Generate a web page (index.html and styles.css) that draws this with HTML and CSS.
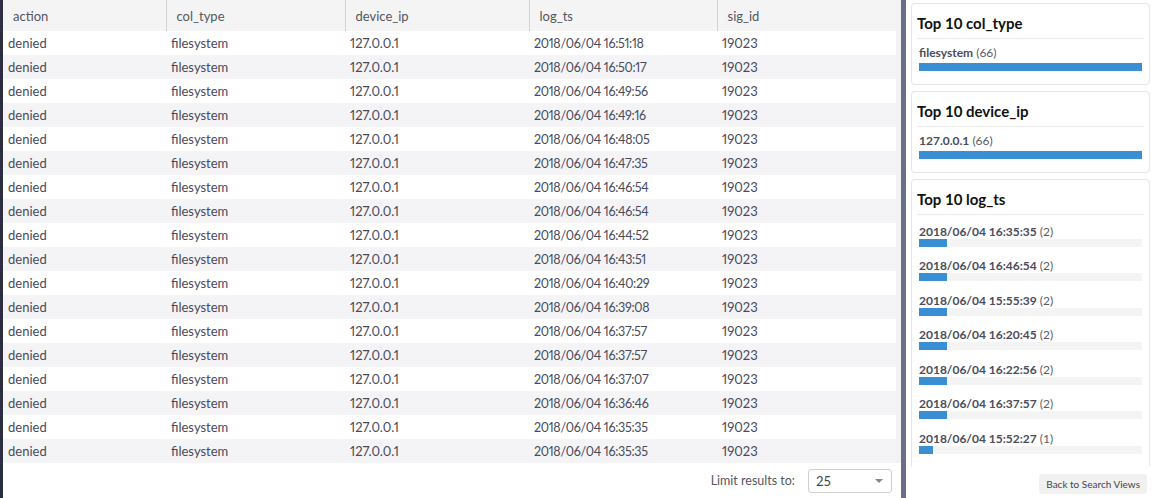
FILE: index.html
```html
<!DOCTYPE html>
<html>
<head>
<meta charset="utf-8">
<link rel="stylesheet" href="styles.css">
</head>
<body>
<div class="app">
  <div class="leftbar"></div>
  <div class="main">
    <div class="table-area">
      <table class="grid">
        <colgroup>
          <col class="c1"><col class="c2"><col class="c3"><col class="c4"><col class="c5">
        </colgroup>
        <thead>
          <tr><th>action</th><th>col_type</th><th>device_ip</th><th>log_ts</th><th>sig_id</th></tr>
        </thead>
        <tbody>
          <tr><td>denied</td><td>filesystem</td><td>127.0.0.1</td><td>2018/06/04 16:51:18</td><td>19023</td></tr>
          <tr><td>denied</td><td>filesystem</td><td>127.0.0.1</td><td>2018/06/04 16:50:17</td><td>19023</td></tr>
          <tr><td>denied</td><td>filesystem</td><td>127.0.0.1</td><td>2018/06/04 16:49:56</td><td>19023</td></tr>
          <tr><td>denied</td><td>filesystem</td><td>127.0.0.1</td><td>2018/06/04 16:49:16</td><td>19023</td></tr>
          <tr><td>denied</td><td>filesystem</td><td>127.0.0.1</td><td>2018/06/04 16:48:05</td><td>19023</td></tr>
          <tr><td>denied</td><td>filesystem</td><td>127.0.0.1</td><td>2018/06/04 16:47:35</td><td>19023</td></tr>
          <tr><td>denied</td><td>filesystem</td><td>127.0.0.1</td><td>2018/06/04 16:46:54</td><td>19023</td></tr>
          <tr><td>denied</td><td>filesystem</td><td>127.0.0.1</td><td>2018/06/04 16:46:54</td><td>19023</td></tr>
          <tr><td>denied</td><td>filesystem</td><td>127.0.0.1</td><td>2018/06/04 16:44:52</td><td>19023</td></tr>
          <tr><td>denied</td><td>filesystem</td><td>127.0.0.1</td><td>2018/06/04 16:43:51</td><td>19023</td></tr>
          <tr><td>denied</td><td>filesystem</td><td>127.0.0.1</td><td>2018/06/04 16:40:29</td><td>19023</td></tr>
          <tr><td>denied</td><td>filesystem</td><td>127.0.0.1</td><td>2018/06/04 16:39:08</td><td>19023</td></tr>
          <tr><td>denied</td><td>filesystem</td><td>127.0.0.1</td><td>2018/06/04 16:37:57</td><td>19023</td></tr>
          <tr><td>denied</td><td>filesystem</td><td>127.0.0.1</td><td>2018/06/04 16:37:57</td><td>19023</td></tr>
          <tr><td>denied</td><td>filesystem</td><td>127.0.0.1</td><td>2018/06/04 16:37:07</td><td>19023</td></tr>
          <tr><td>denied</td><td>filesystem</td><td>127.0.0.1</td><td>2018/06/04 16:36:46</td><td>19023</td></tr>
          <tr><td>denied</td><td>filesystem</td><td>127.0.0.1</td><td>2018/06/04 16:35:35</td><td>19023</td></tr>
          <tr><td>denied</td><td>filesystem</td><td>127.0.0.1</td><td>2018/06/04 16:35:35</td><td>19023</td></tr>
        </tbody>
      </table>
    </div>
    <div class="table-footer">
      <span class="limit-label">Limit results to:</span>
      <div class="select">
        <span>25</span>
        <span class="caret"></span>
      </div>
    </div>
  </div>
  <div class="divider"></div>
  <aside class="sidebar">
    <div class="cards">
      <section class="card card-short">
        <h3 class="card-title">Top 10 col_type</h3>
        <div class="item">
          <div class="item-label"><b>filesystem</b> (66)</div>
          <div class="track"><div class="bar" style="width:100%"></div></div>
        </div>
      </section>
      <section class="card card-short">
        <h3 class="card-title">Top 10 device_ip</h3>
        <div class="item">
          <div class="item-label"><b>127.0.0.1</b> (66)</div>
          <div class="track"><div class="bar" style="width:100%"></div></div>
        </div>
      </section>
      <section class="card card-tall">
        <h3 class="card-title">Top 10 log_ts</h3>
        <div class="item">
          <div class="item-label"><b>2018/06/04 16:35:35</b> (2)</div>
          <div class="track"><div class="bar" style="width:12.4%"></div></div>
        </div>
        <div class="item">
          <div class="item-label"><b>2018/06/04 16:46:54</b> (2)</div>
          <div class="track"><div class="bar" style="width:12.4%"></div></div>
        </div>
        <div class="item">
          <div class="item-label"><b>2018/06/04 15:55:39</b> (2)</div>
          <div class="track"><div class="bar" style="width:12.4%"></div></div>
        </div>
        <div class="item">
          <div class="item-label"><b>2018/06/04 16:20:45</b> (2)</div>
          <div class="track"><div class="bar" style="width:12.4%"></div></div>
        </div>
        <div class="item">
          <div class="item-label"><b>2018/06/04 16:22:56</b> (2)</div>
          <div class="track"><div class="bar" style="width:12.4%"></div></div>
        </div>
        <div class="item">
          <div class="item-label"><b>2018/06/04 16:37:57</b> (2)</div>
          <div class="track"><div class="bar" style="width:12.4%"></div></div>
        </div>
        <div class="item">
          <div class="item-label"><b>2018/06/04 15:52:27</b> (1)</div>
          <div class="track"><div class="bar" style="width:6.2%"></div></div>
        </div>
      </section>
    </div>
    <div class="sidebar-footer">
      <button class="back-btn">Back to Search Views</button>
    </div>
  </aside>
</div>
</body>
</html>
```

FILE: styles.css
```css
* { box-sizing: border-box; }
html, body {
  margin: 0;
  padding: 0;
  width: 1154px;
  height: 498px;
  overflow: hidden;
  background: #ffffff;
  font-family: "Lato", "Open Sans", sans-serif;
}
.app {
  display: flex;
  width: 1154px;
  height: 498px;
}
.leftbar {
  width: 3px;
  flex: 0 0 3px;
  background: #2c2f41;
}
.main {
  flex: 0 0 898px;
  width: 898px;
  display: flex;
  flex-direction: column;
  background: #ffffff;
}
.table-area {
  height: 463px;
  overflow: hidden;
  background: #f2f2f2;
}
.grid {
  width: 893px;
  border-collapse: collapse;
  table-layout: fixed;
  font-size: 13px;
  color: #484a5c;
}
.c1 { width: 163px; }
.c2 { width: 179px; }
.c3 { width: 184px; }
.c4 { width: 188px; }
.c5 { width: 179px; }
.grid th {
  height: 31px;
  background: #f4f4f4;
  text-align: left;
  font-weight: normal;
  color: #55565f;
  padding: 0 10px;
  border-left: 1px solid #d2d2d2;
}
.grid th:first-child { border-left: none; }
.grid td {
  height: 24px;
  padding: 0 5px;
  white-space: nowrap;
  font-variant-numeric: proportional-nums;
}
.grid td:nth-child(4) {
  font-size: 12.5px;
  letter-spacing: -0.3px;
}
.grid tbody tr:nth-child(odd) td { background: #ffffff; }
.grid tbody tr:nth-child(even) td { background: #f4f4f6; }
.table-footer {
  flex: 1;
  display: flex;
  align-items: center;
  justify-content: flex-end;
  padding: 0 9px 0 0;
  gap: 13px;
}
.limit-label {
  font-size: 12.5px;
  color: #55565f;
}
.select {
  width: 84px;
  height: 24px;
  border: 1px solid #cfcfcf;
  border-radius: 3px;
  display: flex;
  align-items: center;
  justify-content: space-between;
  padding: 0 8px 0 7px;
  font-size: 13px;
  color: #44454f;
  background: #fff;
}
.caret {
  width: 0;
  height: 0;
  border-left: 4px solid transparent;
  border-right: 4px solid transparent;
  border-top: 4px solid #888;
}
.divider {
  flex: 0 0 5px;
  width: 5px;
  background: #6b6e89;
}
.sidebar {
  flex: 1;
  display: flex;
  flex-direction: column;
  background: #ffffff;
}
.cards {
  height: 467px;
  overflow: hidden;
  padding: 3px 4px 0 5px;
  display: flex;
  flex-direction: column;
  gap: 6px;
}
.card {
  border: 1px solid #e6e6e6;
  border-radius: 4px;
  padding: 0 5px 13px 5px;
  background: #fff;
  flex: 0 0 auto;
}
.card-title {
  margin: 0;
  font-size: 15px;
  font-weight: bold;
  color: #111;
  height: 35px;
  line-height: 38px;
  border-bottom: 1px solid #ececec;
}
.item {
  padding: 7px 2px 0 2px;
}
.item-label {
  font-size: 12px;
  color: #5a5b68;
  line-height: 14px;
}
.item-label b { color: #4b4c5c; }
.track {
  margin-top: 3px;
  height: 8px;
  background: #f4f4f4;
}
.bar {
  height: 8px;
  background: #3a8fd4;
}
.card-tall .item { padding-top: 9.5px; padding-bottom: 2px; }
.card-tall .item + .item { padding-top: 10.5px; }
.card-tall .track { margin-top: 0; }
.sidebar-footer {
  flex: 1;
  display: flex;
  justify-content: flex-end;
  align-items: flex-start;
  padding: 7px 7px 0 0;
}
.back-btn {
  font-family: "Lato", "Open Sans", sans-serif;
  font-size: 10px;
  color: #444;
  background: #f1f1f1;
  border: none;
  border-radius: 3px;
  height: 20px;
  padding: 0 7px;
}
```
